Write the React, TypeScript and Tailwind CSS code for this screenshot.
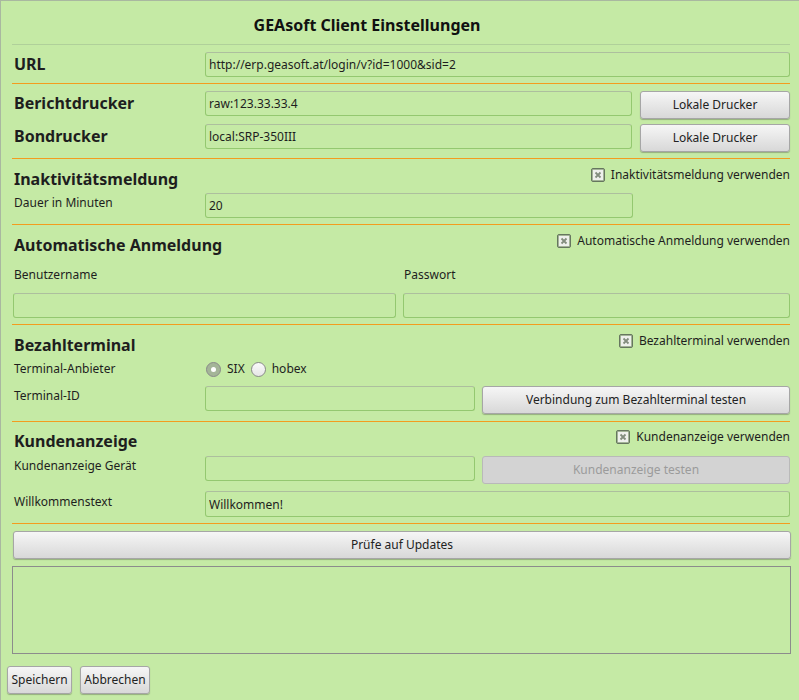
import React, { useState } from "react";

const inputCls =
  "h-[25px] bg-[#c5eaa5] border border-[#94c870] border-t-[#adbf9e] rounded-[3px] px-[3px] text-[12px] text-[#1e1e1e] outline-none";
const btnCls =
  "h-[28px] rounded-[3px] border border-[#a6a6a6] bg-linear-to-b from-[#f6f6f6] to-[#d8d8d8] shadow-[0_1px_1px_rgba(0,0,0,0.25)] text-[12px] text-[#222]";

const Checkbox: React.FC<{ label: string }> = ({ label }) => (
  <label className="flex items-center h-[16px] gap-[6px] text-[12px] leading-[16px] text-[#1e1e1e]">
    <span className="w-[14px] h-[14px] rounded-[2px] border border-[#66765f] bg-[#a3b497] flex items-center justify-center">
      <svg width="10" height="10" viewBox="0 0 10 10">
        <rect x="0" y="0" width="10" height="10" fill="#eef0ec" />
        <path d="M2.5 2.5L7.5 7.5M7.5 2.5L2.5 7.5" stroke="#838d7e" strokeWidth="1.8" />
      </svg>
    </span>
    {label}
  </label>
);

const Radio: React.FC<{ checked?: boolean; label: string }> = ({ checked, label }) => (
  <label className="flex items-center gap-[6px] text-[12px] text-[#1e1e1e]">
    <span
      className={`w-[15px] h-[15px] rounded-full border border-[#8a8a8a] flex items-center justify-center ${
        checked ? "bg-[#a4b598]" : "bg-linear-to-b from-[#fbfbfb] to-[#e6e6e6]"
      }`}
    >
      {checked && <span className="w-[5px] h-[5px] rounded-full bg-white" />}
    </span>
    {label}
  </label>
);

const Orange: React.FC<{ className?: string }> = ({ className }) => (
  <div className={`h-px bg-[#f39c1f] ${className ?? ""}`} />
);

const SectionHead: React.FC<{ title: string; check: string; className?: string }> = ({
  title,
  check,
  className,
}) => (
  <div className={`flex justify-between items-start ${className ?? ""}`}>
    <h2 className="pl-[2px] h-[24px] leading-[24px] text-[16px] font-bold text-[#1e1e1e]">{title}</h2>
    <Checkbox label={check} />
  </div>
);

const App: React.FC = () => {
  const [url, setUrl] = useState("http://erp.geasoft.at/login/v?id=1000&sid=2");

  return (
    <div
      className="w-[799px] h-[700px] bg-[#c5eaa5] border-t border-l border-[#a9b8a0] overflow-hidden"
      style={{ fontFamily: '"Noto Sans", "Open Sans", sans-serif' }}
    >
      <div className="pl-[11px] pr-[9px]">
        {/* Title */}
        <div className="h-[43px] pt-[4px] pr-[68px] flex items-center justify-center text-[16px] font-bold text-[#111]">
          GEAsoft Client Einstellungen
        </div>
        <div className="h-px bg-[#b0d09a]" />

        {/* URL */}
        <div className="mt-[7px] flex h-[25px]">
          <div className="w-[193px] pl-[2px] text-[16px] font-bold leading-[25px] text-[#1e1e1e]">URL</div>
          <input className={`${inputCls} flex-1`} value={url} onChange={(e) => setUrl(e.target.value)} />
        </div>
        <Orange className="mt-[6px]" />

        {/* Drucker */}
        <div className="mt-[7px] flex h-[28px] gap-[8px]">
          <div className="w-[185px] pl-[2px] text-[16px] font-bold leading-[25px] text-[#1e1e1e]">Berichtdrucker</div>
          <input className={`${inputCls} flex-1`} defaultValue="raw:123.33.33.4" />
          <button className={`${btnCls} w-[150px]`}>Lokale Drucker</button>
        </div>
        <div className="mt-[5px] flex h-[28px] gap-[8px]">
          <div className="w-[185px] pl-[2px] text-[16px] font-bold leading-[25px] text-[#1e1e1e]">Bondrucker</div>
          <input className={`${inputCls} flex-1`} defaultValue="local:SRP-350III" />
          <button className={`${btnCls} w-[150px]`}>Lokale Drucker</button>
        </div>
        <Orange className="mt-[6px]" />

        {/* Inaktivität */}
        <SectionHead className="mt-[8px]" title="Inaktivitätsmeldung" check="Inaktivitätsmeldung verwenden" />
        <div className="mt-[2px] flex items-start">
          <div className="w-[193px] pl-[2px] text-[12px] leading-[20px] text-[#1e1e1e]">Dauer in Minuten</div>
          <input className={`${inputCls} w-[428px]`} defaultValue="20" />
        </div>
        <Orange className="mt-[6px]" />

        {/* Automatische Anmeldung */}
        <SectionHead className="mt-[8px]" title="Automatische Anmeldung" check="Automatische Anmeldung verwenden" />
        <div className="mt-[8px] flex gap-[7px]">
          <div className="w-[384px] flex flex-col">
            <div className="pl-[2px] text-[12px] leading-[20px] text-[#1e1e1e]">Benutzername</div>
            <input className={`${inputCls} mt-[8px] ml-px`} />
          </div>
          <div className="flex-1 flex flex-col">
            <div className="pl-[1px] text-[12px] leading-[20px] text-[#1e1e1e]">Passwort</div>
            <input type="password" className={`${inputCls} mt-[8px]`} />
          </div>
        </div>
        <Orange className="mt-[6px]" />

        {/* Bezahlterminal */}
        <SectionHead className="mt-[8px]" title="Bezahlterminal" check="Bezahlterminal verwenden" />
        <div className="mt-[2px] flex items-center h-[20px]">
          <div className="w-[194px] pl-[2px] text-[12px] text-[#1e1e1e]">Terminal-Anbieter</div>
          <div className="flex items-center gap-[6px]">
            <Radio checked label="SIX" />
            <Radio label="hobex" />
          </div>
        </div>
        <div className="mt-[7px] flex items-start gap-[7px] h-[28px]">
          <div className="w-[186px] pl-[2px] text-[12px] leading-[20px] text-[#1e1e1e]">Terminal-ID</div>
          <input className={`${inputCls} w-[270px]`} />
          <button className={`${btnCls} flex-1`}>Verbindung zum Bezahlterminal testen</button>
        </div>
        <Orange className="mt-[7px]" />

        {/* Kundenanzeige */}
        <SectionHead className="mt-[7px]" title="Kundenanzeige" check="Kundenanzeige verwenden" />
        <div className="mt-[3px] flex items-start gap-[7px] h-[28px]">
          <div className="w-[186px] pl-[2px] text-[12px] leading-[20px] text-[#1e1e1e]">Kundenanzeige Gerät</div>
          <input className={`${inputCls} w-[270px]`} />
          <button
            disabled
            className="flex-1 h-[28px] rounded-[3px] border border-[#b9b9b9] bg-[#d3d3d3] text-[12px] text-[#9b9b9b]"
          >
            Kundenanzeige testen
          </button>
        </div>
        <div className="mt-[7px] flex items-start">
          <div className="w-[193px] pl-[2px] text-[12px] leading-[22px] text-[#1e1e1e]">Willkommenstext</div>
          <input className={`${inputCls} h-[26px] flex-1`} defaultValue="Willkommen!" />
        </div>
        <Orange className="mt-[6px]" />

        {/* Updates */}
        <button className={`${btnCls} mt-[7px] ml-px w-[778px]`}>Prüfe auf Updates</button>
        <textarea className="mt-[7px] block w-[779px] h-[88px] bg-[#c5eaa5] border border-[#8c8c8c] resize-none outline-none text-[12px]" />
      </div>

      {/* Footer */}
      <div className="mt-[12px] pl-[6px] flex gap-[8px]">
        <button className={`${btnCls} w-[65px]`}>Speichern</button>
        <button className={`${btnCls} w-[70px]`}>Abbrechen</button>
      </div>
    </div>
  );
};

export default App;
